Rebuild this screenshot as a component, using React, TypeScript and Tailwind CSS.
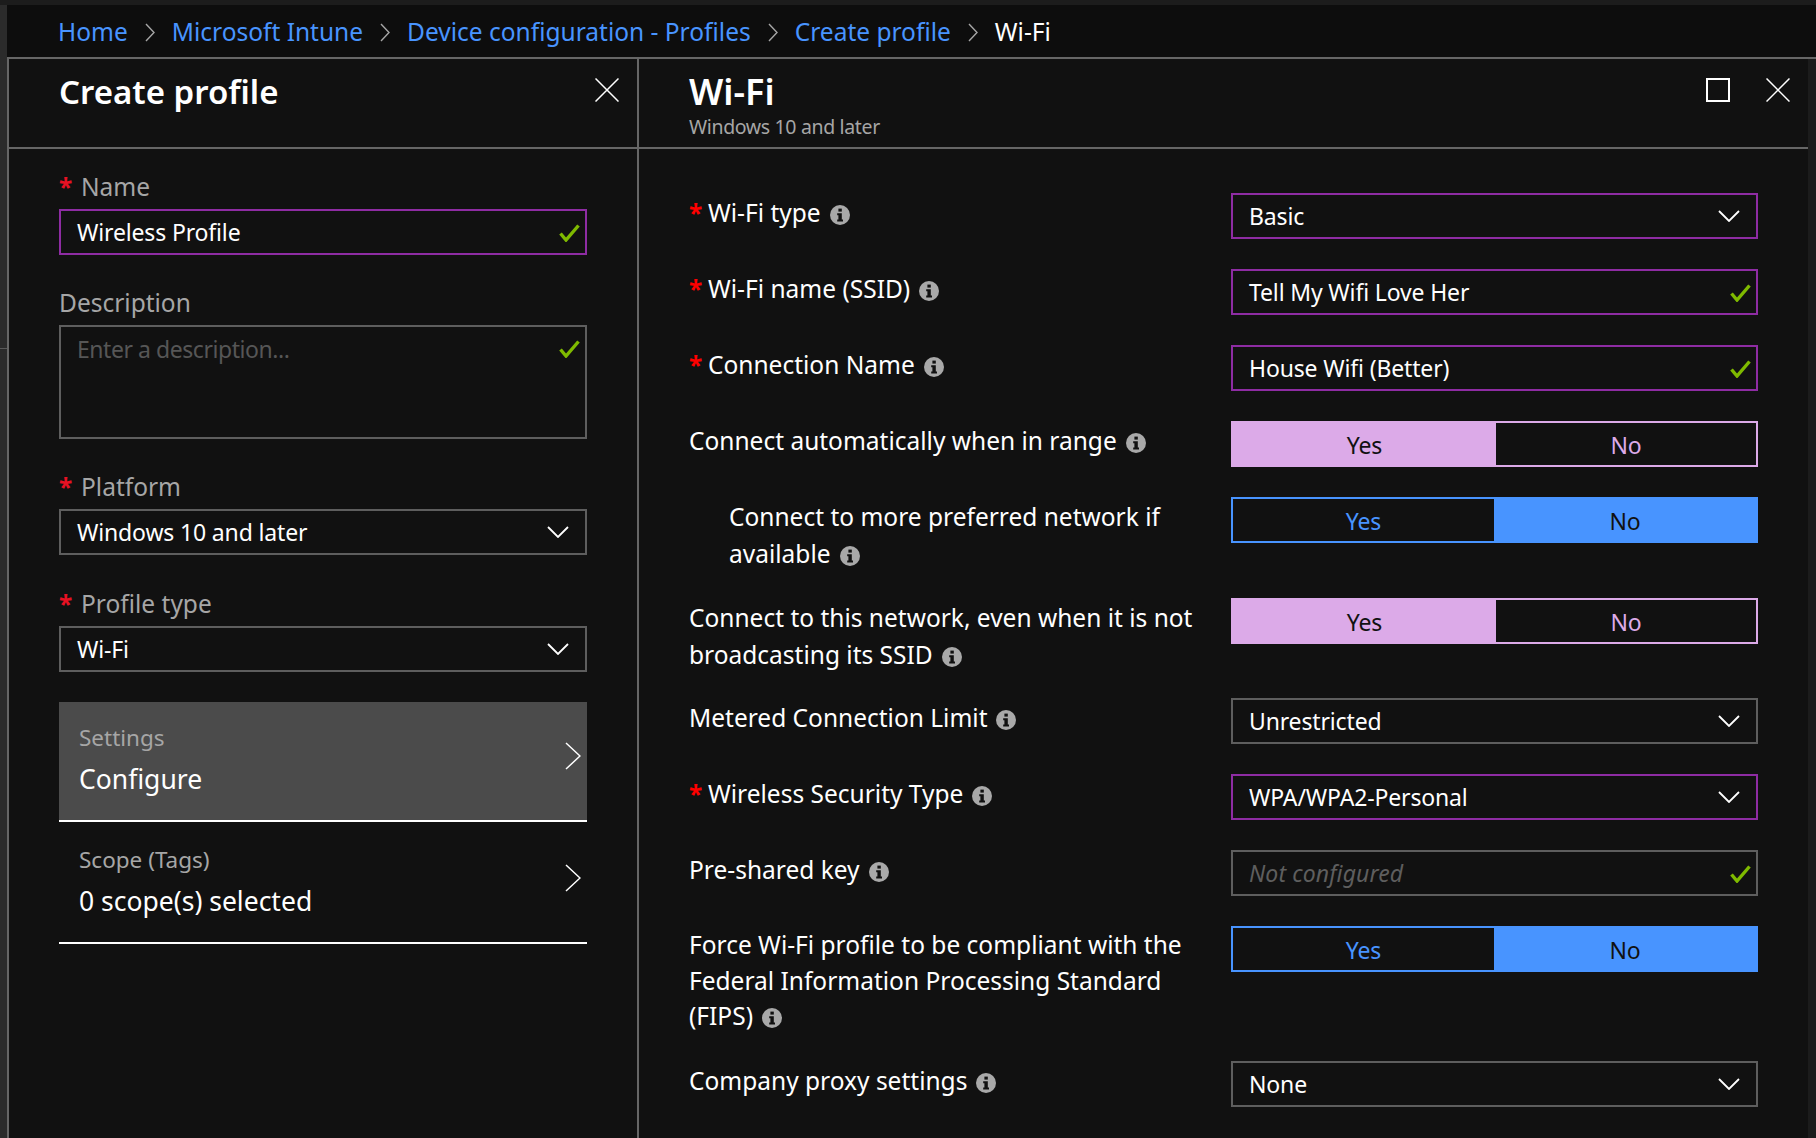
import React from 'react';

const font = "font-['Noto_Sans',sans-serif]";

const Check = () => (
  <svg width="21" height="18" viewBox="0 0 21 18" className="shrink-0 mt-[2px]">
    <path d="M1.5 9.5 L7 16 L19.5 1.5" fill="none" stroke="#7fba00" strokeWidth="3.4" />
  </svg>
);

const Chevron = () => (
  <svg width="22" height="12" viewBox="0 0 22 12" className="shrink-0">
    <path d="M1 1 L11 11 L21 1" fill="none" stroke="#ffffff" strokeWidth="1.8" />
  </svg>
);

const Crumb = () => (
  <svg width="10" height="19" viewBox="0 0 10 19" className="shrink-0">
    <path d="M1 1 L9 9.5 L1 18" fill="none" stroke="#a6a6a6" strokeWidth="1.4" />
  </svg>
);

const Close = () => (
  <svg width="24" height="24" viewBox="0 0 24 24">
    <path d="M0.5 0.5 L23.5 23.5 M23.5 0.5 L0.5 23.5" fill="none" stroke="#ffffff" strokeWidth="1.5" />
  </svg>
);

const Info = () => (
  <svg width="20" height="20" viewBox="0 0 20 20" className="block">
    <circle cx="10" cy="10" r="10" fill="#a9a9a9" />
    <rect x="8.4" y="3.6" width="3.4" height="3" fill="#111111" />
    <path d="M7.2 8.2 H11.8 V14.6 H13 V16.6 H7.2 V14.6 H8.4 V10.2 H7.2 Z" fill="#111111" />
  </svg>
);

const Arrow = () => (
  <svg width="16" height="28" viewBox="0 0 16 28" className="shrink-0 mb-[11px]">
    <path d="M1 1 L15 14 L1 27" fill="none" stroke="#ffffff" strokeWidth="1.5" />
  </svg>
);

const Control = ({ value, purple, kind, muted }: { value: string; purple?: boolean; kind: 'check' | 'select'; muted?: boolean }) => (
  <div
    className={`w-full h-[46px] border-2 flex items-center justify-between pl-[16px] ${kind === 'select' ? 'pr-[16px]' : 'pr-[5px]'} ${purple ? 'border-[#8e2ca3]' : 'border-[#5e5e5e]'}`}
  >
    <span className={`text-[23px] ${muted ? 'italic text-[#5e5e5e] tracking-[0.1px]' : 'text-white tracking-[-0.15px]'}`}>{value}</span>
    {kind === 'check' ? <Check /> : <Chevron />}
  </div>
);

const Toggle = ({ on, color }: { on: 'Yes' | 'No'; color: 'pink' | 'blue' }) => {
  const pink = color === 'pink';
  return (
    <div className={`w-full h-[46px] border-2 flex text-[23px] tracking-[-0.15px] ${pink ? 'border-[#dcaae8]' : 'border-[#4894ff]'}`}>
      <div
        className={`flex items-center justify-center pt-[2px] ${pink ? 'w-[263px]' : 'w-[261px]'} ${
          on === 'Yes' ? 'bg-[#dcaae8] text-[#111111]' : 'text-[#4894ff]'
        }`}
      >
        Yes
      </div>
      <div
        className={`flex-1 flex items-center justify-center pt-[2px] ${
          on === 'No' ? 'bg-[#4894ff] text-[#111111]' : 'text-[#dcaae8]'
        }`}
      >
        No
      </div>
    </div>
  );
};

const InfoTag = () => (
  <span className="inline-block ml-[9px] align-[-3px]">
    <Info />
  </span>
);

const Label = ({ lines, req, indent, tight }: { lines: string[]; req?: boolean; indent?: boolean; tight?: boolean }) => (
  <div className={`flex-1 text-[24.5px] text-white ${tight ? 'mt-[1px] leading-[35.5px]' : 'mt-[2px] leading-[36.5px]'} ${indent ? 'pl-[40px]' : ''}`}>
    {req && <span className="inline-block w-[19px] text-[#ff0000] font-bold">*</span>}
    {lines.map((line, i) => (
      <span key={line}>
        {i > 0 && <br />}
        {line}
      </span>
    ))}
    <InfoTag />
  </div>
);

const Row = ({ h, label, children }: { h: string; label: React.ReactNode; children: React.ReactNode }) => (
  <div className={`flex ${h}`}>
    {label}
    <div className="w-[527px] shrink-0">{children}</div>
  </div>
);

const FieldLabel = ({ text, req }: { text: string; req?: boolean }) => (
  <div className="h-[36px] pb-[7px] flex items-center text-[24.5px] text-[#a6a6a6]">
    {req && <span className="w-[22px] text-[#e81123] font-bold">*</span>}
    {text}
  </div>
);

const Blade = ({ title, value, active, h }: { title: string; value: string; active?: boolean; h: string }) => (
  <div className={`${h} border-b-2 border-white flex items-center justify-between pl-[20px] pr-[6px] ${active ? 'bg-[#4b4b4b]' : 'pt-[2px]'}`}>
    <div>
      <div className="text-[22.5px] leading-[36px] text-[#a6a6a6]">{title}</div>
      <div className="text-[26.5px] leading-[46px] text-white">{value}</div>
    </div>
    <Arrow />
  </div>
);

export default function App() {
  return (
    <div className={`w-[1816px] h-[1138px] overflow-hidden bg-[#1c1c1c] flex flex-col ${font}`}>
      <div className="h-[5px] shrink-0" />
      <div className="flex-1 flex min-h-0">
        <div className="w-[7px] shrink-0 bg-[#2b2b2b]">
          <div className="h-[343px]" />
          <div className="h-[1px] bg-[#5a5a5a]" />
        </div>
        <div className="flex-1 flex flex-col min-w-0">
          {/* breadcrumb */}
          <div className="h-[54px] shrink-0 bg-[#0d0d0d] flex items-center pl-[51px] pt-[3px] text-[24.5px] text-[#4894ff] border-b-2 border-[#666666]">
            <span>Home</span>
            <span className="mx-[17px]"><Crumb /></span>
            <span>Microsoft Intune</span>
            <span className="mx-[17px]"><Crumb /></span>
            <span>Device configuration - Profiles</span>
            <span className="mx-[17px]"><Crumb /></span>
            <span>Create profile</span>
            <span className="mx-[17px]"><Crumb /></span>
            <span className="text-white">Wi-Fi</span>
          </div>

          <div className="flex-1 flex min-h-0">
            {/* Create profile */}
            <div className="w-[632px] shrink-0 bg-[#111111] border-l-2 border-r-2 border-[#666666] flex flex-col">
              <div className="h-[90px] shrink-0 border-b-2 border-[#666666] flex justify-between pl-[50px] pr-[18px] pt-[19px]">
                <h1 className="text-[33px] leading-[40px] -mt-[6px] font-semibold text-white">Create profile</h1>
                <Close />
              </div>
              <div className="px-[50px] pt-[24px] w-[628px]">
                <FieldLabel text="Name" req />
                <Control value="Wireless Profile" purple kind="check" />
                <div className="h-[34px]" />
                <FieldLabel text="Description" />
                <div className="h-[114px] border-2 border-[#5e5e5e] flex justify-between pl-[16px] pr-[5px] pt-[5px]">
                  <span className="text-[23px] tracking-[-0.45px] text-[#565656]">Enter a description...</span>
                  <span className="pt-[6px]"><Check /></span>
                </div>
                <div className="h-[34px]" />
                <FieldLabel text="Platform" req />
                <Control value="Windows 10 and later" kind="select" />
                <div className="h-[35px]" />
                <FieldLabel text="Profile type" req />
                <Control value="Wi-Fi" kind="select" />
                <div className="h-[30px]" />
                <Blade h="h-[120px]" title="Settings" value="Configure" active />
                <Blade h="h-[122px]" title="Scope (Tags)" value="0 scope(s) selected" />
              </div>
            </div>

            {/* Wi-Fi */}
            <div className="w-[1169px] shrink-0 bg-[#111111] flex flex-col">
              <div className="h-[90px] shrink-0 border-b-2 border-[#666666] flex justify-between pl-[50px] pr-[18px] pt-[19px]">
                <div className="-mt-[7px]">
                  <h1 className="text-[36px] leading-[42px] font-semibold text-white">Wi-Fi</h1>
                  <p className="text-[19.5px] leading-[28px] tracking-[-0.35px] text-[#a6a6a6]">Windows 10 and later</p>
                </div>
                <div className="flex gap-[36px] h-[24px]">
                  <div className="w-[24px] h-[24px] border-2 border-white" />
                  <Close />
                </div>
              </div>
              <div className="pl-[50px] pr-[50px] pt-[44px]">
                <Row h="h-[76px]" label={<Label lines={['Wi-Fi type']} req />}><Control value="Basic" purple kind="select" /></Row>
                <Row h="h-[76px]" label={<Label lines={['Wi-Fi name (SSID)']} req />}><Control value="Tell My Wifi Love Her" purple kind="check" /></Row>
                <Row h="h-[76px]" label={<Label lines={['Connection Name']} req />}><Control value="House Wifi (Better)" purple kind="check" /></Row>
                <Row h="h-[76px]" label={<Label lines={['Connect automatically when in range']} />}><Toggle on="Yes" color="pink" /></Row>
                <Row h="h-[101px]" label={<Label lines={['Connect to more preferred network if', 'available']} indent />}><Toggle on="No" color="blue" /></Row>
                <Row h="h-[100px]" label={<Label lines={['Connect to this network, even when it is not', 'broadcasting its SSID']} />}><Toggle on="Yes" color="pink" /></Row>
                <Row h="h-[76px]" label={<Label lines={['Metered Connection Limit']} />}><Control value="Unrestricted" kind="select" /></Row>
                <Row h="h-[76px]" label={<Label lines={['Wireless Security Type']} req />}><Control value="WPA/WPA2-Personal" purple kind="select" /></Row>
                <Row h="h-[76px]" label={<Label lines={['Pre-shared key']} />}><Control value="Not configured" muted kind="check" /></Row>
                <Row h="h-[135px]" label={<Label lines={['Force Wi-Fi profile to be compliant with the', 'Federal Information Processing Standard', '(FIPS)']} tight />}><Toggle on="No" color="blue" /></Row>
                <Row h="h-[76px]" label={<Label lines={['Company proxy settings']} />}><Control value="None" kind="select" /></Row>
              </div>
            </div>
          </div>
        </div>
      </div>
    </div>
  );
}
